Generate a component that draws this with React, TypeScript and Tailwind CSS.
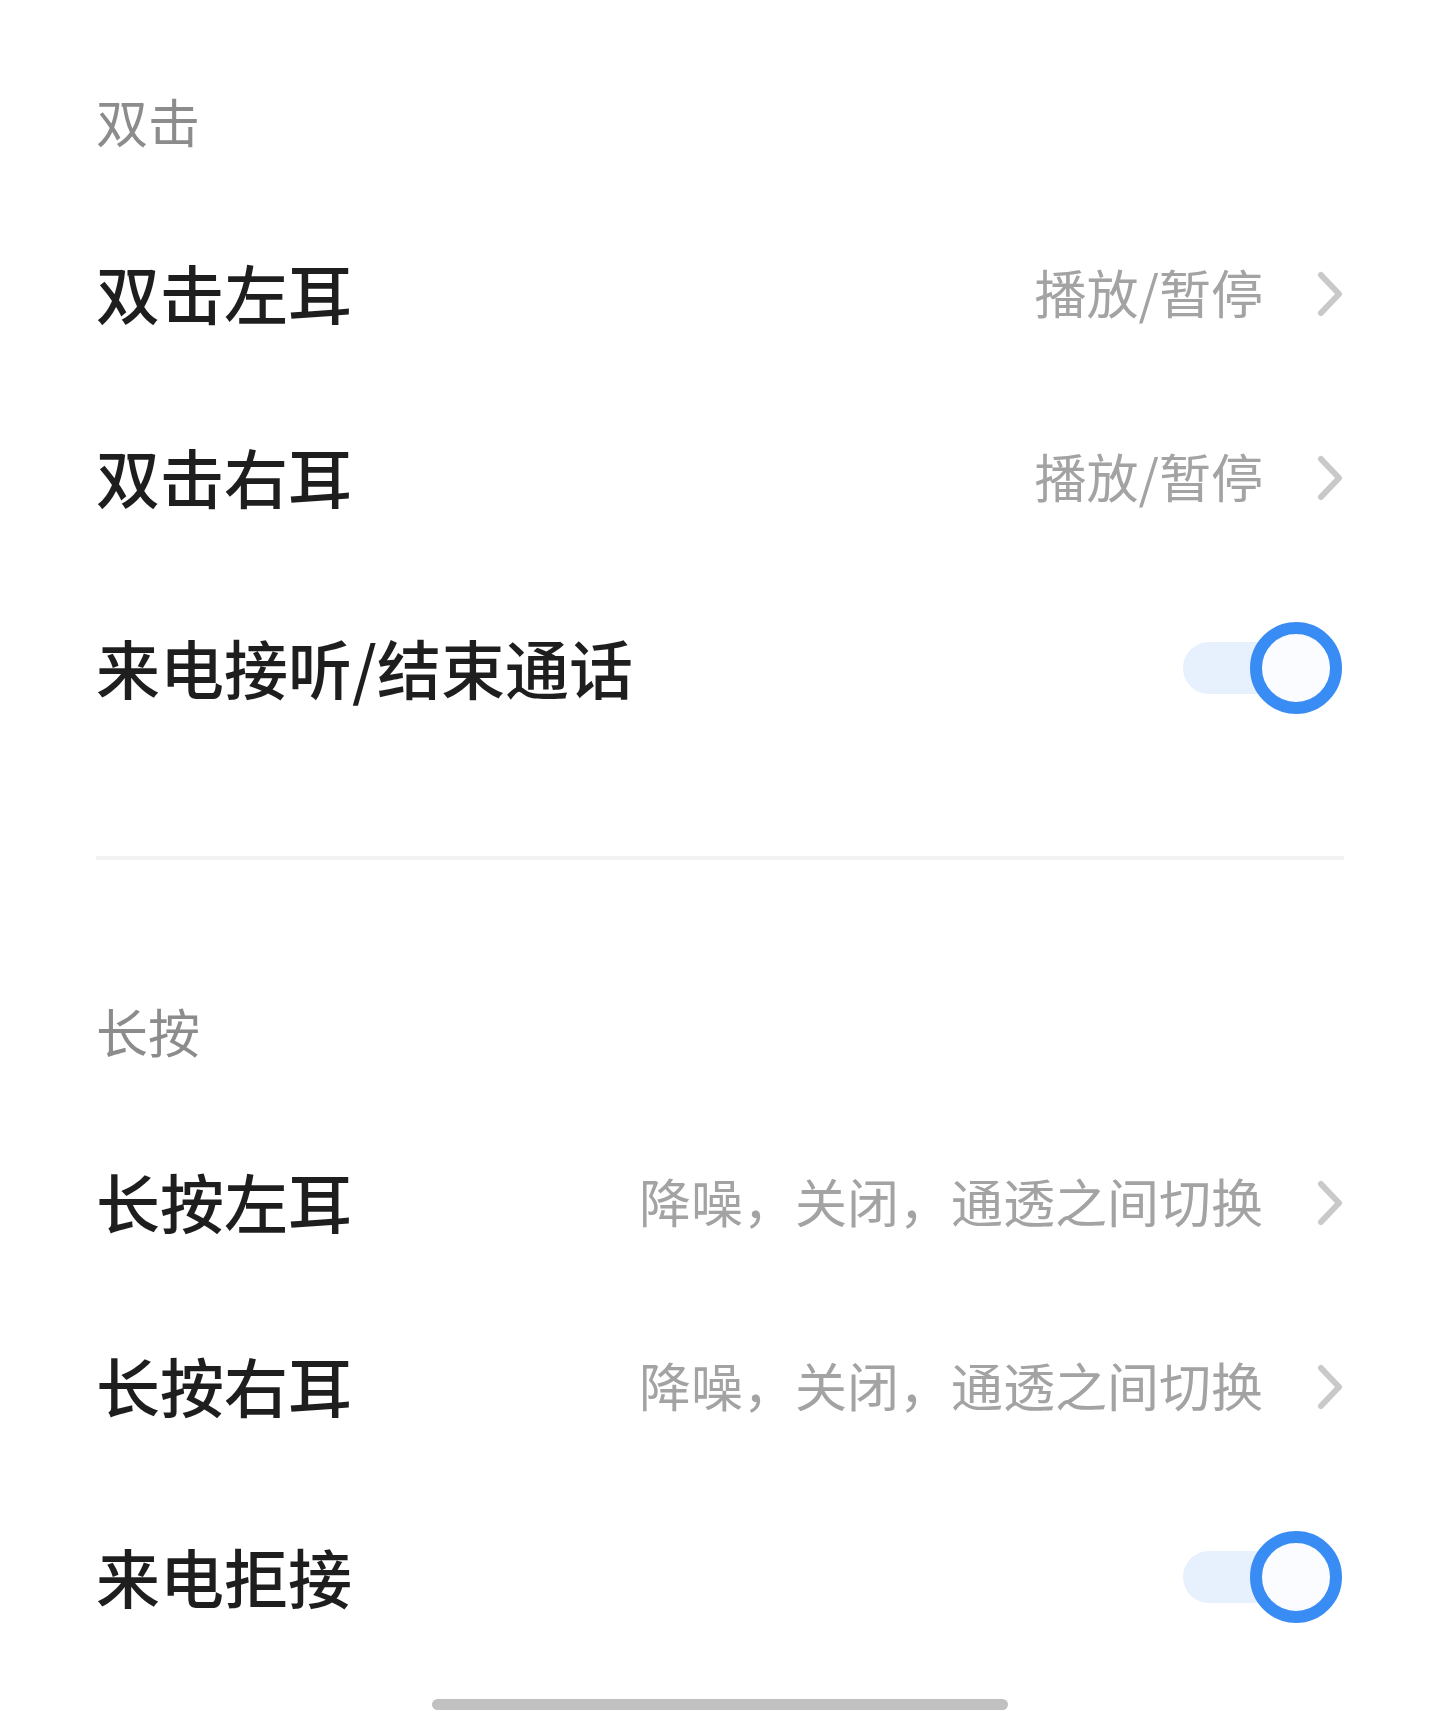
import React from "react"

const font = { fontFamily: '"Noto Sans CJK SC", "Noto Sans", sans-serif' }

function Chevron() {
  return (
    <svg width="28" height="48" viewBox="0 0 28 48" fill="none" className="shrink-0">
      <polyline
        points="5,5 23,24 5,43"
        stroke="#c9c9c9"
        strokeWidth="6"
        strokeLinecap="round"
        strokeLinejoin="round"
      />
    </svg>
  )
}

function Toggle() {
  return (
    <div className="relative mr-[2px] w-[159px] h-[92px] shrink-0">
      <div className="absolute left-0 top-[20px] w-[130px] h-[52px] rounded-full bg-[#e7f0fd]" />
      <div className="absolute right-0 top-0 w-[92px] h-[92px] rounded-full border-[12px] border-[#3a8cf5] bg-[#fafcff]" />
    </div>
  )
}

function LinkRow({ title, value }: { title: string; value: string }) {
  return (
    <div className="flex h-[184px] items-center justify-between">
      <span className="pb-[6px] text-[64px] leading-none font-medium text-[#1e1e1e]">{title}</span>
      <div className="flex items-center gap-[53px]">
        <span className="pb-[4px] text-[52px] leading-none text-[#a3a3a3]">{value}</span>
        <Chevron />
      </div>
    </div>
  )
}

function ToggleRow({ title }: { title: string }) {
  return (
    <div className="flex h-[196px] items-center justify-between">
      <span className="pb-[4px] text-[64px] leading-none font-medium text-[#1e1e1e]">{title}</span>
      <Toggle />
    </div>
  )
}

export default function App() {
  return (
    <main className="min-h-screen w-full bg-white" style={font}>
      <div className="px-[96px] pt-[96px]">
        <div className="text-[52px] leading-[50px] text-[#8c8c8c] mb-[56px]">双击</div>
        <LinkRow title="双击左耳" value="播放/暂停" />
        <LinkRow title="双击右耳" value="播放/暂停" />
        <ToggleRow title="来电接听/结束通话" />

        <div className="mt-[90px] h-[4px] bg-[#f2f2f2]" />

        <div className="mt-[146px] text-[52px] leading-[50px] text-[#8c8c8c] mb-[55px]">长按</div>
        <LinkRow title="长按左耳" value="降噪，关闭，通透之间切换" />
        <LinkRow title="长按右耳" value="降噪，关闭，通透之间切换" />
        <ToggleRow title="来电拒接" />
      </div>
      <div className="mx-auto mt-[24px] h-[11px] w-[576px] rounded-full bg-[#c1c1c1]" />
    </main>
  )
}
